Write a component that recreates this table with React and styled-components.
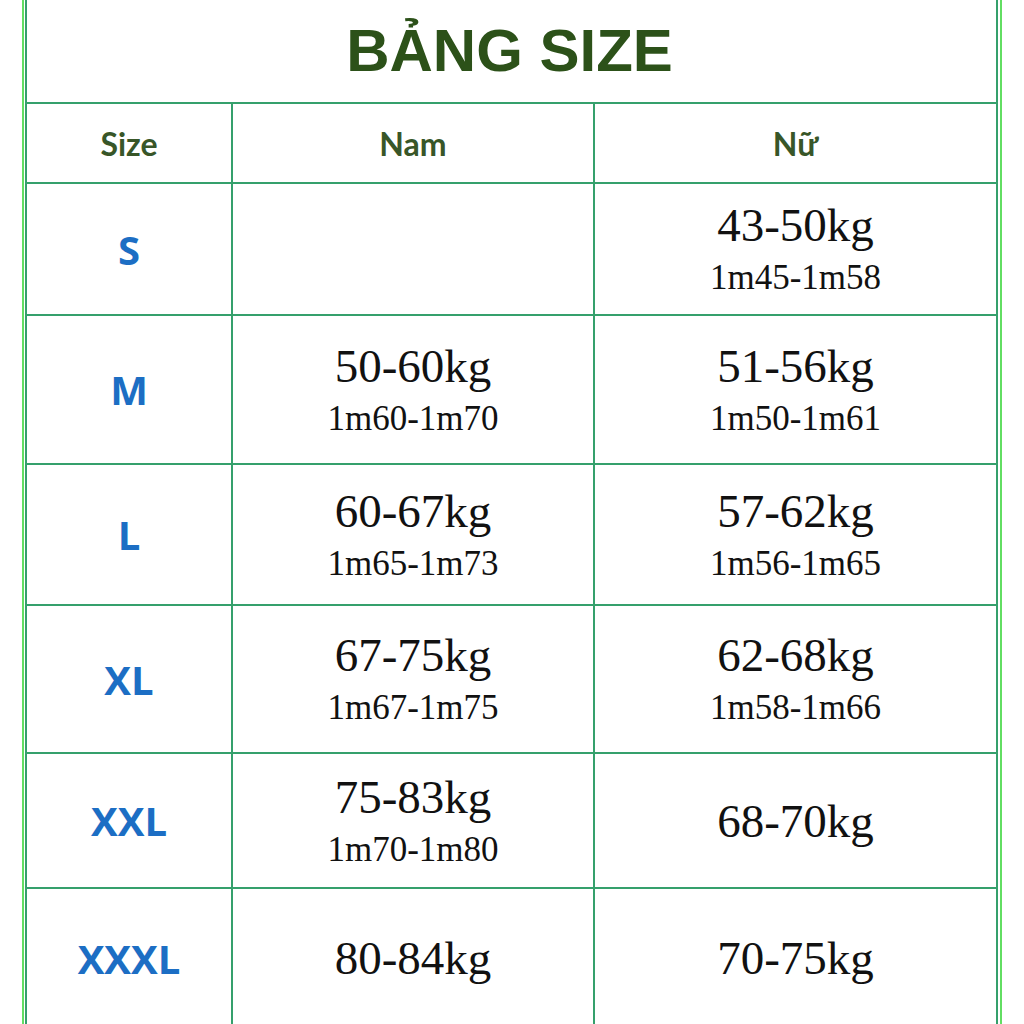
import styled, { createGlobalStyle } from 'styled-components';

const GlobalStyle = createGlobalStyle`
    html, body {
        margin: 0;
        padding: 0;
        background: #ffffff;
    }
    body {
        width: 1024px;
        height: 1024px;
        overflow: hidden;
    }
`;

const LINE = '#35a06c';
const OUTER = '#62de62';

const Frame = styled.div`
    margin-left: 22px;
    width: 973px;
    border-left: 2px solid ${OUTER};
    border-right: 2px solid ${OUTER};
    padding: 0 2px 0 1px;
`;

const Sheet = styled.div`
    display: grid;
    grid-template-columns: 206px 362px 1fr;
    grid-template-rows: 104px 80px 132px 149px 141px 148px 135px 140px;
    border-left: 2px solid ${LINE};
    border-right: 2px solid ${LINE};
`;

const Title = styled.div`
    grid-column: 1 / -1;
    display: flex;
    align-items: center;
    justify-content: center;
    border-bottom: 2px solid ${LINE};
    font-family: "Liberation Sans", Arial, sans-serif;
    font-weight: 700;
    font-size: 60px;
    color: #2c5119;
    padding-bottom: 2px;
    padding-right: 4px;
`;

const Cell = styled.div`
    display: flex;
    flex-direction: column;
    align-items: center;
    justify-content: center;
    border-bottom: 2px solid ${LINE};
    border-right: ${(p) => (p.$last ? 'none' : `2px solid ${LINE}`)};
    box-sizing: border-box;
`;

const HeadText = styled.span`
    font-family: Lato, "Open Sans", sans-serif;
    font-weight: 700;
    font-size: 32px;
    color: #385628;
`;

const SizeText = styled.span`
    font-family: "Open Sans", Lato, sans-serif;
    font-weight: 700;
    font-size: 40px;
    color: #1c6ec4;
`;

const Weight = styled.span`
    font-family: "Liberation Serif", "Times New Roman", serif;
    font-size: 47px;
    line-height: 50px;
    color: #111111;
`;

const Height = styled.span`
    font-family: "Liberation Serif", "Times New Roman", serif;
    font-size: 35px;
    line-height: 40px;
    margin-top: 8px;
    color: #111111;
`;

const rows = [
    { size: 'S', nam: null, nu: ['43-50kg', '1m45-1m58'] },
    { size: 'M', nam: ['50-60kg', '1m60-1m70'], nu: ['51-56kg', '1m50-1m61'] },
    { size: 'L', nam: ['60-67kg', '1m65-1m73'], nu: ['57-62kg', '1m56-1m65'] },
    { size: 'XL', nam: ['67-75kg', '1m67-1m75'], nu: ['62-68kg', '1m58-1m66'] },
    { size: 'XXL', nam: ['75-83kg', '1m70-1m80'], nu: ['68-70kg'] },
    { size: 'XXXL', nam: ['80-84kg'], nu: ['70-75kg'] },
];

const Value = ({ data, last }) => (
    <Cell $last={last}>
        {data && <Weight>{data[0]}</Weight>}
        {data && data[1] && <Height>{data[1]}</Height>}
    </Cell>
);

const App = () => {
    return (
        <>
            <GlobalStyle />
            <Frame>
                <Sheet>
                    <Title>BẢNG SIZE</Title>
                    <Cell><HeadText>Size</HeadText></Cell>
                    <Cell><HeadText>Nam</HeadText></Cell>
                    <Cell $last><HeadText>Nữ</HeadText></Cell>
                    {rows.map((r) => (
                        <>
                            <Cell key={r.size}><SizeText>{r.size}</SizeText></Cell>
                            <Value data={r.nam} />
                            <Value data={r.nu} last />
                        </>
                    ))}
                </Sheet>
            </Frame>
        </>
    );
};

export default App;
